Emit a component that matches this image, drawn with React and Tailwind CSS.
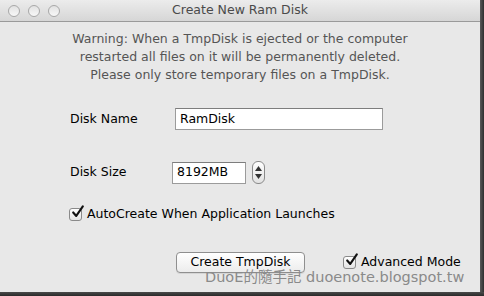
function Check() {
  return (
    <span className="w-[13px] h-[13px] shrink-0 rounded-[3px] border border-[#8a8a8a] bg-gradient-to-b from-white to-[#e4e4e4] relative">
      <svg viewBox="0 0 16 16" className="absolute -top-[4px] left-[1px] w-[14px] h-[14px]">
        <path d="M2.5 8.5 L6 12.5 L13.5 1.5" fill="none" stroke="#111" strokeWidth="2.4" strokeLinecap="round" strokeLinejoin="round" />
      </svg>
    </span>
  )
}

export default function App() {
  const font = { fontFamily: '"DejaVu Sans", "Noto Sans CJK TC", sans-serif' }
  return (
    <div className="w-[484px] h-[296px] bg-[#3a3a3a] flex flex-col" style={font}>
      <div className="flex flex-1 min-h-0">
        <div className="w-[480px] flex flex-col bg-[#e8e8e8] relative overflow-hidden">
          {/* title bar */}
          <div className="h-[22px] shrink-0 bg-gradient-to-b from-[#ececec] to-[#d6d6d6] border-b border-[#9a9a9a] flex items-center px-[8px] relative">
            <div className="flex gap-[8px]">
              <span className="w-[12px] h-[12px] rounded-full border border-[#a8a8a8] bg-gradient-to-b from-[#e2e2e2] to-[#f8f8f8]" />
              <span className="w-[12px] h-[12px] rounded-full border border-[#a8a8a8] bg-gradient-to-b from-[#e2e2e2] to-[#f8f8f8]" />
              <span className="w-[12px] h-[12px] rounded-full border border-[#a8a8a8] bg-gradient-to-b from-[#e2e2e2] to-[#f8f8f8]" />
            </div>
            <div className="absolute inset-0 flex items-center justify-center text-[12.5px] text-[#4a4a4a]">Create New Ram Disk</div>
          </div>

          <div className="text-center text-[12.5px] leading-[18px] text-[#555] mt-[8px]">
            <p>Warning: When a TmpDisk is ejected or the computer</p>
            <p>restarted all files on it will be permanently deleted.</p>
            <p>Please only store temporary files on a TmpDisk.</p>
          </div>

          <div className="flex items-center mt-[24px] pl-[70px] text-[12.5px] text-black">
            <span className="w-[105px]">Disk Name</span>
            <div className="w-[208px] h-[22px] bg-white border border-[#9b9b9b] border-t-[#7d7d7d] flex items-center px-[4px]">RamDisk</div>
          </div>

          <div className="flex items-center mt-[31px] pl-[70px] text-[12.5px] text-black">
            <span className="w-[102px]">Disk Size</span>
            <div className="w-[74px] h-[22px] bg-white border border-[#9b9b9b] border-t-[#7d7d7d] flex items-center px-[4px]">8192MB</div>
            <div className="ml-[6px] w-[13px] h-[23px] rounded-[6px] border border-[#8a8a8a] bg-gradient-to-b from-white to-[#e2e2e2] flex flex-col items-center justify-center gap-[3px]">
              <svg width="7" height="5" viewBox="0 0 7 5"><path d="M3.5 0 L7 5 L0 5 Z" fill="#333" /></svg>
              <svg width="7" height="5" viewBox="0 0 7 5"><path d="M0 0 L7 0 L3.5 5 Z" fill="#333" /></svg>
            </div>
          </div>

          <div className="flex items-center gap-[5px] mt-[21px] pl-[69px] text-[12.5px] text-black">
            <Check />
            <span>AutoCreate When Application Launches</span>
          </div>

          <div className="flex items-center mt-[28px] pl-[176px] text-[12.5px] text-black">
            <div className="w-[129px] h-[21px] rounded-[4px] border border-[#8f8f8f] bg-gradient-to-b from-white to-[#ececec] flex items-center justify-center shadow-[0_1px_0_rgba(0,0,0,0.08)]">Create TmpDisk</div>
            <div className="flex items-center gap-[5px] ml-[38px]">
              <Check />
              <span>Advanced Mode</span>
            </div>
          </div>

          <div className="absolute left-[205px] top-[267px] text-[14.5px] text-[#8a8a8a] whitespace-nowrap">
            DuoE的隨手記 duoenote.blogspot.tw
          </div>
        </div>
        <div className="w-[4px] bg-gradient-to-r from-[#5a5a5a] to-[#2e2e2e]" />
      </div>
      <div className="h-[4px] shrink-0 bg-gradient-to-b from-[#4a4a4a] to-[#2a2a2a]" />
    </div>
  )
}
